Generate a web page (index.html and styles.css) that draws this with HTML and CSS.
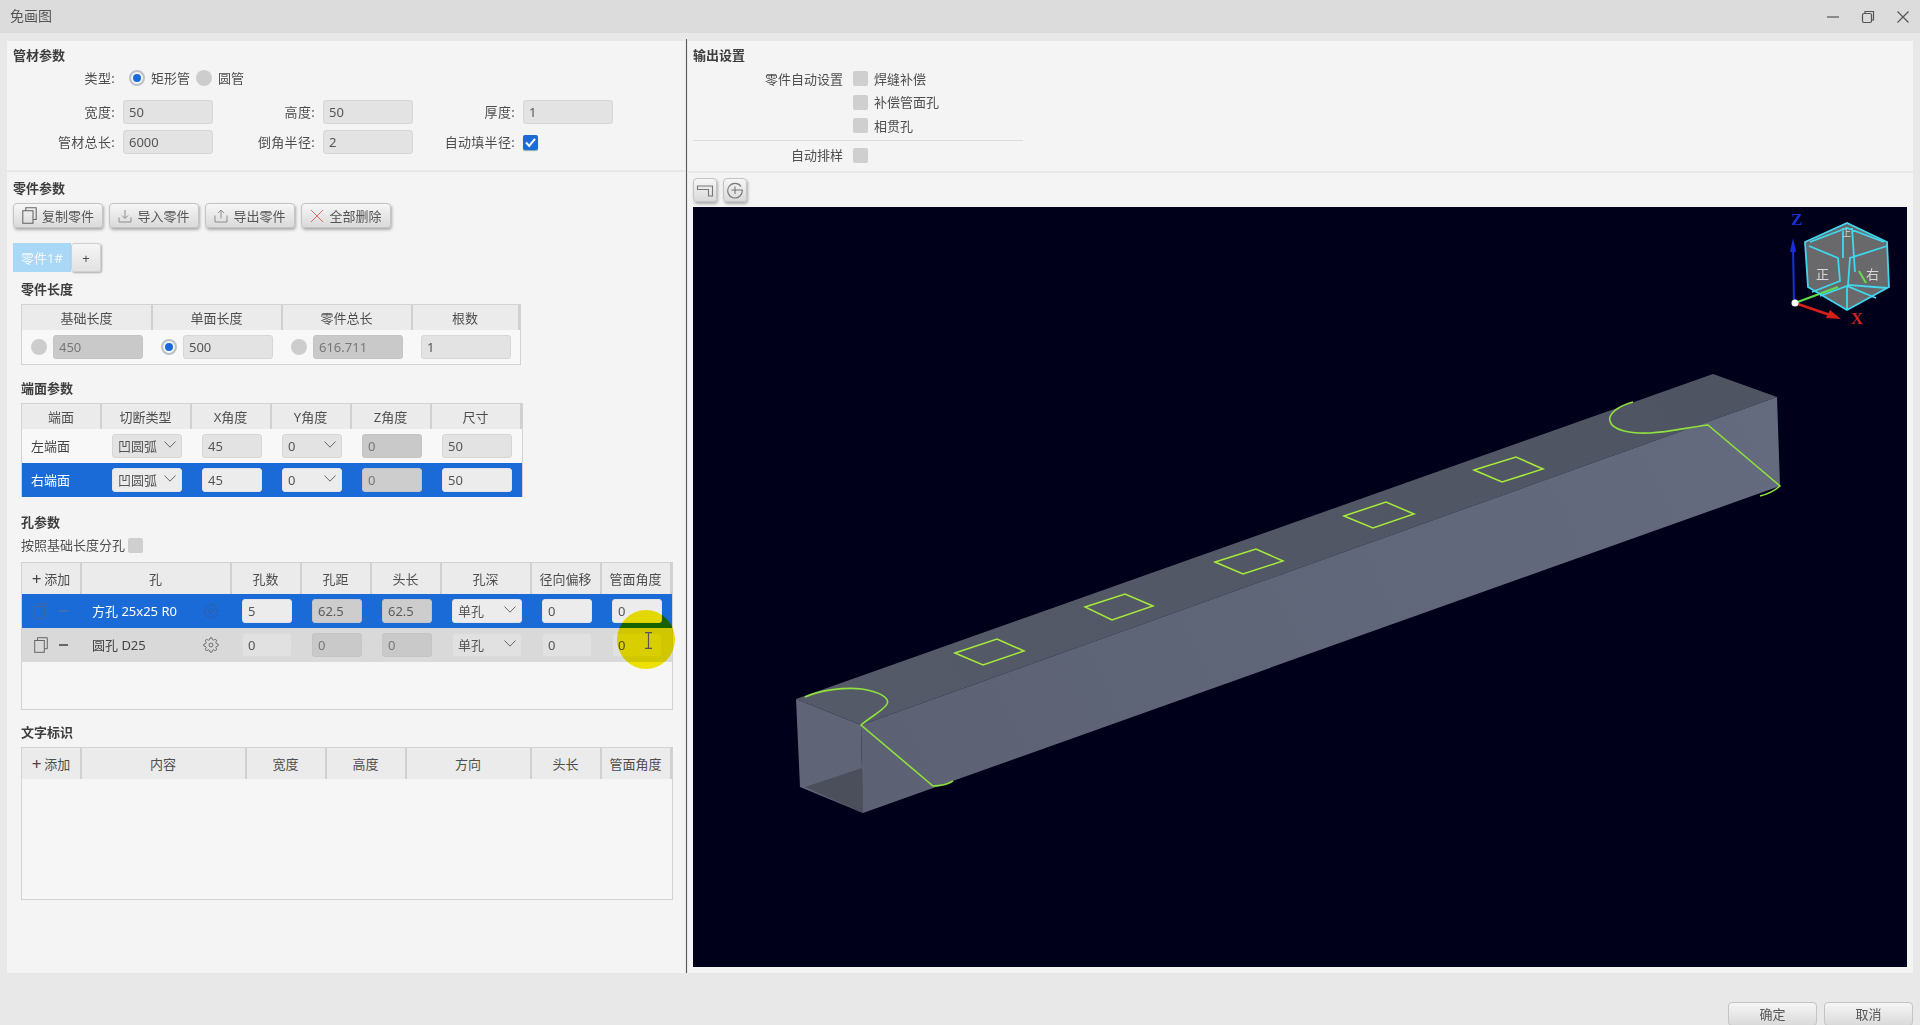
FILE: index.html
```html
<!DOCTYPE html>
<html lang="zh">
<head>
<meta charset="utf-8">
<title>免画图</title>
<link rel="stylesheet" href="styles.css">
</head>
<body>
<svg class="defs" width="0" height="0">
  <symbol id="gear" viewBox="0 0 24 24"><circle cx="12" cy="12" r="3"/><path d="M19.4 15a1.65 1.65 0 0 0 .33 1.82l.06.06a2 2 0 0 1 0 2.83 2 2 0 0 1-2.83 0l-.06-.06a1.65 1.65 0 0 0-1.82-.33 1.65 1.65 0 0 0-1 1.51V21a2 2 0 0 1-2 2 2 2 0 0 1-2-2v-.09A1.65 1.65 0 0 0 9 19.4a1.65 1.65 0 0 0-1.82.33l-.06.06a2 2 0 0 1-2.83 0 2 2 0 0 1 0-2.83l.06-.06a1.65 1.65 0 0 0 .33-1.82 1.65 1.65 0 0 0-1.51-1H3a2 2 0 0 1-2-2 2 2 0 0 1 2-2h.09A1.65 1.65 0 0 0 4.6 9a1.65 1.65 0 0 0-.33-1.82l-.06-.06a2 2 0 0 1 0-2.83 2 2 0 0 1 2.83 0l.06.06a1.65 1.65 0 0 0 1.82.33H9a1.65 1.65 0 0 0 1-1.51V3a2 2 0 0 1 2-2 2 2 0 0 1 2 2v.09a1.65 1.65 0 0 0 1 1.51 1.65 1.65 0 0 0 1.82-.33l.06-.06a2 2 0 0 1 2.83 0 2 2 0 0 1 0 2.83l-.06.06a1.65 1.65 0 0 0-.33 1.82V9a1.65 1.65 0 0 0 1.51 1H21a2 2 0 0 1 2 2 2 2 0 0 1-2 2h-.09a1.65 1.65 0 0 0-1.51 1z"/></symbol>
  <symbol id="copy" viewBox="0 0 14 16"><path d="M3.5 3.5V.7h9.8v11h-3"/><rect x=".7" y="3.5" width="9.6" height="11.8"/></symbol>
  <symbol id="chev" viewBox="0 0 12 7"><path d="M.5.5 6 6.2 11.500.5"/></symbol>
</svg>

<header class="titlebar">
  <span class="title">免画图</span>
  <div class="winctl">
    <svg width="14" height="14" viewBox="0 0 14 14"><path d="M1 7h12"/></svg>
    <svg width="14" height="14" viewBox="0 0 14 14"><path d="M4 3V1.500h8.500V10H10.500"/><rect x="1.500" y="3.500" width="9" height="9" rx="1.500"/></svg>
    <svg width="14" height="14" viewBox="0 0 14 14"><path d="M1.500 1.500l11 11M12.500 1.500l-11 11"/></svg>
  </div>
</header>

<main class="main">
  <section class="left">
    <div class="panel tube">
      <h2 class="h">管材参数</h2>
      <div class="row type-row">
        <label class="lbl">类型:</label>
        <span class="radio on"></span><span class="opt">矩形管</span>
        <span class="radio"></span><span class="opt">圆管</span>
      </div>
      <div class="row field-row first">
        <label class="lbl">宽度:</label><div class="inp w90">50</div>
        <label class="lbl">高度:</label><div class="inp w90">50</div>
        <label class="lbl">厚度:</label><div class="inp w90">1</div>
      </div>
      <div class="row field-row">
        <label class="lbl">管材总长:</label><div class="inp w90">6000</div>
        <label class="lbl">倒角半径:</label><div class="inp w90">2</div>
        <label class="lbl">自动填半径:</label>
        <span class="check on"><svg width="15" height="15" viewBox="0 0 15 15"><path d="M3 7.500l3.200 3.500L12 3.800"/></svg></span>
      </div>
    </div>

    <div class="panel parts">
      <h2 class="h">零件参数</h2>
      <div class="tools">
        <button class="btn"><svg class="ic-stroke" width="15" height="17"><use href="#copy"/></svg>复制零件</button>
        <button class="btn"><svg class="ic-stroke light" width="14" height="14" viewBox="0 0 14 14"><path d="M7 1v8M4 6.500 7 9.500l3-3M1 8.500v4.500h12V8.500"/></svg>导入零件</button>
        <button class="btn"><svg class="ic-stroke light" width="14" height="14" viewBox="0 0 14 14"><path d="M7 9.500V1M4 4l3-3 3 3M1 6.500v6.500h12V6.500"/></svg>导出零件</button>
        <button class="btn"><svg class="ic-x" width="14" height="14" viewBox="0 0 15 15"><path d="M1 1l13 13M14 1 1 14"/></svg>全部删除</button>
      </div>
      <div class="tabs">
        <div class="tab active">零件1#</div>
        <div class="tab plus">+</div>
      </div>

      <div class="inner">
        <h3 class="h sec-len">零件长度</h3>
        <div class="tbl t-len">
          <div class="tr th"><span>基础长度</span><span>单面长度</span><span>零件总长</span><span>根数</span></div>
          <div class="tr td">
            <div class="c"><span class="radio"></span><div class="inp w90 dis">450</div></div>
            <div class="c"><span class="radio on"></span><div class="inp w90">500</div></div>
            <div class="c"><span class="radio"></span><div class="inp w90 dis">616.711</div></div>
            <div class="c"><div class="inp w90">1</div></div>
          </div>
        </div>

        <h3 class="h sec-end">端面参数</h3>
        <div class="tbl t-end">
          <div class="tr th"><span>端面</span><span>切断类型</span><span>X角度</span><span>Y角度</span><span>Z角度</span><span>尺寸</span></div>
          <div class="tr td">
            <div class="c name">左端面</div>
            <div class="c"><div class="inp w70 sel">凹圆弧<svg class="chev"><use href="#chev"/></svg></div></div>
            <div class="c"><div class="inp w60">45</div></div>
            <div class="c"><div class="inp w60 sel">0<svg class="chev"><use href="#chev"/></svg></div></div>
            <div class="c"><div class="inp w60 dis">0</div></div>
            <div class="c"><div class="inp w70">50</div></div>
          </div>
          <div class="tr td selected">
            <div class="c name">右端面</div>
            <div class="c"><div class="inp w70 sel">凹圆弧<svg class="chev"><use href="#chev"/></svg></div></div>
            <div class="c"><div class="inp w60">45</div></div>
            <div class="c"><div class="inp w60 sel">0<svg class="chev"><use href="#chev"/></svg></div></div>
            <div class="c"><div class="inp w60 dis">0</div></div>
            <div class="c"><div class="inp w70">50</div></div>
          </div>
        </div>

        <h3 class="h sec-hole">孔参数</h3>
        <div class="split"><span>按照基础长度分孔</span><span class="check"></span></div>
        <div class="tbl t-hole">
          <div class="tr th"><span class="add"><b>+</b>添加</span><span>孔</span><span>孔数</span><span>孔距</span><span>头长</span><span>孔深</span><span>径向偏移</span><span>管面角度</span></div>
          <div class="tr td selected">
            <div class="c acts"><svg class="ic-stroke" width="14" height="16"><use href="#copy"/></svg><i class="minus"></i></div>
            <div class="c name hole">方孔 25x25 R0<svg class="gear"><use href="#gear"/></svg></div>
            <div class="c"><div class="inp w50">5</div></div>
            <div class="c"><div class="inp w50 dis">62.5</div></div>
            <div class="c"><div class="inp w50 dis">62.5</div></div>
            <div class="c"><div class="inp w70 sel">单孔<svg class="chev"><use href="#chev"/></svg></div></div>
            <div class="c"><div class="inp w50">0</div></div>
            <div class="c"><div class="inp w50">0</div></div>
          </div>
          <div class="tr td grey">
            <div class="c acts"><svg class="ic-stroke" width="14" height="16"><use href="#copy"/></svg><i class="minus"></i></div>
            <div class="c name hole">圆孔 D25<svg class="gear"><use href="#gear"/></svg></div>
            <div class="c"><div class="inp w50">0</div></div>
            <div class="c"><div class="inp w50 dis">0</div></div>
            <div class="c"><div class="inp w50 dis">0</div></div>
            <div class="c"><div class="inp w70 sel">单孔<svg class="chev"><use href="#chev"/></svg></div></div>
            <div class="c"><div class="inp w50">0</div></div>
            <div class="c"><div class="inp w50">0</div></div>
          </div>
          <div class="spot"></div>
          <svg class="ibeam" width="9" height="17" viewBox="0 0 9 17"><path d="M1 .7h7M4.500.7v15.600M1 16.300h7"/></svg>
        </div>

        <h3 class="h sec-text">文字标识</h3>
        <div class="tbl t-text">
          <div class="tr th"><span class="add"><b>+</b>添加</span><span>内容</span><span>宽度</span><span>高度</span><span>方向</span><span>头长</span><span>管面角度</span></div>
        </div>
      </div>
    </div>
  </section>

  <div class="divider"></div>

  <section class="right">
    <div class="panel output">
      <h2 class="h">输出设置</h2>
      <div class="orow"><label class="olbl">零件自动设置</label><span class="check"></span><span class="opt">焊缝补偿</span></div>
      <div class="orow"><label class="olbl"></label><span class="check"></span><span class="opt">补偿管面孔</span></div>
      <div class="orow"><label class="olbl"></label><span class="check"></span><span class="opt">相贯孔</span></div>
      <hr class="ohr">
      <div class="orow"><label class="olbl">自动排样</label><span class="check"></span></div>
    </div>
    <div class="panel view">
      <div class="vtools">
        <button class="vbtn"><svg width="18" height="18" viewBox="0 0 18 18"><path d="M1.500 5h15v10h-4V8.500h-11z"/></svg></button>
        <button class="vbtn"><svg width="18" height="18" viewBox="0 0 18 18"><path d="M15 5.500A7.300 7.300 0 1 0 16.300 9H9M9 5.500V13M5.500 9H9"/></svg></button>
      </div>
      <div class="canvas">
        <svg class="scene" viewBox="693 207 1214 760" width="1214" height="760">
          <defs>
            <linearGradient id="gTop" gradientUnits="userSpaceOnUse" x1="800" y1="700" x2="1780" y2="390"><stop offset="0" stop-color="#555a69"/><stop offset="1" stop-color="#4f5462"/></linearGradient>
            <linearGradient id="gFront" gradientUnits="userSpaceOnUse" x1="860" y1="810" x2="1780" y2="400"><stop offset="0" stop-color="#5c6274"/><stop offset="1" stop-color="#646b7e"/></linearGradient>
          </defs>
          <polygon points="796,699 861,725 863,813 800,787" fill="#5f6577"/>
          <polygon points="805,787 862,768 863,813" fill="#4b4f5c"/>
          <polygon points="796,699 1713,374 1777,397 861,725" fill="url(#gTop)"/>
          <polygon points="861,725 1777,397 1780,486 863,813" fill="url(#gFront)"/>
          <g class="cut">
            <path d="M1633 402C1618 406 1608 414 1610 421 1612 430 1630 434 1650 433 1670 432 1690 427 1708 425L1780 486Q1772 493 1760 496"/>
            <path d="M805 697C820 690 845 687 862 689 880 692 890 698 887 704 885 709 872 716 861 725L933 786Q945 786 953 781"/>
          </g>
          <g class="slot">
            <polygon points="955,653 997,639 1024,651 983,665"/>
            <polygon points="1085,607 1125,594 1153,606 1112,620"/>
            <polygon points="1215,562 1256,549 1283,561 1243,574"/>
            <polygon points="1344,516 1386,502 1414,514 1373,528"/>
            <polygon points="1474,470 1516,457 1543,469 1502,482"/>
          </g>
          <polygon points="1805,242 1847,223 1887,242 1889,287 1847,310 1808,287" fill="#69696c"/>
          <path d="M1795 303 1838 287M1859 271 1866 283" stroke="#5fe04a" stroke-width="2"/>
          <g class="cube">
            <path d="M1805 242 1847 223 1887 242 1889 287 1847 310 1808 287Z"/>
            <path d="M1809 246 1838 258 1840 281 1812 292M1887 246 1850 258 1848 285 1887 288M1843 228 1843 258M1852 228 1855 272M1820 296 1847 286 1876 298M1847 286V310M1810 242 1847 228 1884 242"/>
          </g>
          <text class="face" x="1816" y="279">正</text>
          <text class="face" x="1866" y="279">右</text>
          <text class="face small" x="1842" y="236">上</text>
          <path d="M1794 303 1793 245" stroke="#1a2fd8" stroke-width="2"/>
          <polygon points="1793,238 1790,252 1796,252" fill="#1a2fd8"/>
          <text class="axis z" x="1791" y="225">Z</text>
          <path d="M1795 303 1830 315" stroke="#d8201a" stroke-width="2.500"/>
          <polygon points="1841,319 1826,318 1830,310" fill="#d8201a"/>
          <circle cx="1795" cy="303" r="3.500" fill="#fff"/>
          <text class="axis x" x="1851" y="324">X</text>
        </svg>
      </div>
    </div>
  </section>
</main>

<footer class="footer">
  <button class="fbtn">确定</button>
  <button class="fbtn">取消</button>
</footer>
</body>
</html>
```
FILE: styles.css
```css
* { box-sizing: border-box; }
html, body { margin: 0; height: 100%; }
body {
  width: 1920px; height: 1025px; overflow: hidden;
  background: #e8e8e8; color: #4e4e4e;
  font: 13px/18px "Noto Sans", "Noto Sans CJK SC", sans-serif;
}
.defs { position: absolute; }
.h { margin: 0; height: 18px; padding-bottom: 2px; font-size: 13px; line-height: 16px; font-weight: 700; color: #3d3d3d; }

.titlebar { height: 33px; background: #dcdcdc; display: flex; align-items: center; justify-content: space-between; padding: 0 10px; }
.title { font-size: 14px; color: #555; padding-bottom: 2px; }
.winctl { display: flex; gap: 21px; }
.winctl svg { fill: none; stroke: #555; stroke-width: 1.2; }

.main { display: flex; padding: 8px 7px 0; height: 940px; }
.left { width: 678px; display: flex; flex-direction: column; gap: 2px; }
.divider { width: 1px; margin-left: 1px; background: #5c5c5c; margin-top: -2px; }
.right { width: 1225px; margin-left: 1px; display: flex; flex-direction: column; gap: 2px; }
.panel { background: #f4f4f4; padding: 6px 6px 0; }

.tube { height: 129px; }
.row { display: flex; align-items: center; padding-left: 2px; }
.lbl { width: 100px; text-align: right; margin-right: 8px; flex: none; letter-spacing: .3px; white-space: nowrap; direction: ltr; }
.field-row .inp { margin-right: 2px; }
.type-row { height: 24px; margin-top: 1px; }
.type-row .lbl { margin-right: 14px; }
.opt { margin: 0 6px; }
.field-row { margin-top: 6px; }
.field-row.first { margin-top: 10px; }

.inp {
  height: 24px; flex: none; display: flex; align-items: center; padding-left: 5px;
  background: #e3e3e3; border: 1px solid #d6d6d6; border-radius: 3px; color: #555;
}
.w90 { width: 90px; } .w70 { width: 70px; } .w60 { width: 60px; } .w50 { width: 50px; }
.dis { background: #c9c9c9; border-color: #c4c4c4; color: #777; }
.sel { justify-content: space-between; padding-right: 5px; }
.chev { width: 12px; height: 7px; fill: none; stroke: #666; stroke-width: 1; margin-top: -4px; }

.radio { width: 16px; height: 16px; border-radius: 50%; background: #cdcdcd; flex: none; display: inline-flex; align-items: center; justify-content: center; }
.radio.on { background: #f2f4f8; border: 2px solid #bcc0c8; }
.radio.on::after { content: ""; width: 8px; height: 8px; border-radius: 50%; background: #1a6bd8; }
.check { width: 15px; height: 15px; border-radius: 2px; background: #cfcfcf; flex: none; display: inline-block; }
.check.on { background: #1a6bd8; box-shadow: 0 1px 1px #8aa; }
.check.on svg { display: block; fill: none; stroke: #fff; stroke-width: 2; }

.parts { height: 801px; padding-top: 8px; }
.tools { display: flex; gap: 6px; margin-top: 5px; }
.btn, .fbtn, .vbtn {
  font: inherit; color: #555; padding: 0; cursor: default;
  border: 1px solid #c4c4c4; border-radius: 4px;
  background: linear-gradient(#f6f6f6, #dadada);
}
.btn { width: 90px; height: 25px; display: flex; align-items: center; justify-content: center; gap: 5px; box-shadow: 1px 2px 3px rgba(0,0,0,.3); }
.ic-stroke { fill: none; stroke: #666; stroke-width: 1; flex: none; }
.ic-stroke.light { stroke: #8d8d8d; }
.ic-x { fill: none; stroke: #e0625c; stroke-width: 1; flex: none; }

.tabs { display: flex; margin-top: 15px; height: 29px; }
.tab { display: flex; align-items: center; justify-content: center; }
.tab.active { width: 58px; background: #a8d8f6; color: #f4f8fb; }
.tab.plus { width: 30px; border: 1px solid #d0d0d0; border-radius: 3px; background: linear-gradient(#f6f6f6, #e2e2e2); box-shadow: 1px 1px 2px rgba(0,0,0,.3); }

.inner { padding-left: 8px; }
.sec-len { margin-top: 9px; }
.sec-end { margin-top: 15px; }
.sec-hole { margin-top: 17px; }
.sec-text { margin-top: 14px; }

.tbl { margin-top: 5px; border: 1px solid #d2d2d2; background: #f6f6f6; position: relative; }
.tr { display: grid; }
.th { background: #ebebeb; }
.th > span { display: flex; align-items: center; justify-content: center; border-right: 2px solid #d0d0d0; margin-right: -1px; }
.th > span:last-child { margin-right: 0; }
.td { height: 34px; background: #f8f8f8; }
.c { display: flex; align-items: center; padding-left: 11px; gap: 6px; }

.t-len { width: 500px; height: 61px; }
.t-len .tr { grid-template-columns: 130px 130px 130px 108px; }
.t-len .th { height: 25px; }
.t-len .c { padding-left: 9px; }

.t-end { width: 502px; height: 94px; border-bottom: 0; }
.t-end .tr { grid-template-columns: 79px 90px 80px 80px 80px 91px; }
.t-end .th { height: 25px; }
.c.name { padding-left: 9px; color: #444; }

.selected { background: #1a6bd8; }
.selected .name { color: #fff; }
.selected .inp:not(.dis) { background: #ececec; border-color: #e4e4e4; }
.selected .inp.dis { background: #cdcdcd; color: #5c5c5c; }
.t-end .selected .inp.dis { color: #777; }
.grey { background: #d9d9d9; }
.grey .inp:not(.dis) { background: #e1e1e1; border-color: #dadada; }

.split { display: flex; align-items: center; gap: 3px; height: 18px; margin-top: 4px; }
.t-hole { margin-top: 8px; width: 652px; height: 148px; }
.t-hole .tr { grid-template-columns: 59px 150px 70px 70px 70px 90px 70px 71px; }
.t-hole .th { height: 31px; }
.t-text { width: 652px; height: 153px; }
.t-text .tr { grid-template-columns: 59px 165px 80px 80px 125px 70px 71px; }
.t-text .th { height: 31px; }
.add b { font-weight: 400; font-size: 17px; margin-right: 3px; color: #444; }

.acts { padding-left: 12px; gap: 11px; }
.minus { width: 9px; height: 2px; background: #666; flex: none; }
.selected .acts .ic-stroke { stroke: #3f68a0; }
.selected .minus { background: #3f6fb0; }
.c.name.hole { padding-left: 11px; padding-right: 12px; justify-content: space-between; }
.gear { width: 16px; height: 18px; fill: none; stroke: #5c5c5c; stroke-width: 1.3; flex: none; }
.selected .gear { stroke: #2f5c9c; }
.spot { position: absolute; left: 595px; top: 47px; width: 58px; height: 59px; border-radius: 50%; background: #f6ea00; mix-blend-mode: multiply; }
.ibeam { position: absolute; left: 622px; top: 69px; fill: none; stroke: #555; stroke-width: 1.2; }

.output { height: 130px; padding-left: 5px; }
.orow { display: flex; align-items: center; height: 23.5px; }
.olbl { width: 150px; text-align: right; margin-right: 10px; flex: none; }
.output .h { margin-bottom: 2px; }
.output .opt { margin-left: 6px; }
.ohr { border: 0; height: 1px; background: #dcdcdc; width: 330px; margin: 2px 0 3px; }

.view { height: 800px; padding: 5px 6px 6px 5px; }
.vtools { display: flex; gap: 6px; height: 24px; }
.vbtn { width: 24px; height: 24px; display: flex; align-items: center; justify-content: center; box-shadow: 1px 2px 3px rgba(0,0,0,.3); }
.vbtn svg { fill: none; stroke: #777; stroke-width: 1.1; }
.canvas { margin-top: 5px; width: 1214px; height: 760px; background: #00001b; overflow: hidden; }
.scene { display: block; }
.cut { fill: none; stroke: #8fe13c; stroke-width: 1.6; }
.slot { fill: none; stroke: #a6ea3a; stroke-width: 1.5; }
.cube { fill: none; stroke: #3fd8ee; stroke-width: 1.8; }
.face { font: 13px "Noto Sans CJK SC", sans-serif; fill: #d8d8d8; }
.face.small { font-size: 9px; }
.axis { font: 700 17px "Liberation Serif", serif; }
.axis.z { fill: #1a2fd8; }
.axis.x { fill: #d8201a; }

.footer { display: flex; justify-content: flex-end; gap: 7px; padding-right: 7px; margin-top: 29px; }
.fbtn { width: 89px; height: 24px; flex: none; color: #555; }
```
